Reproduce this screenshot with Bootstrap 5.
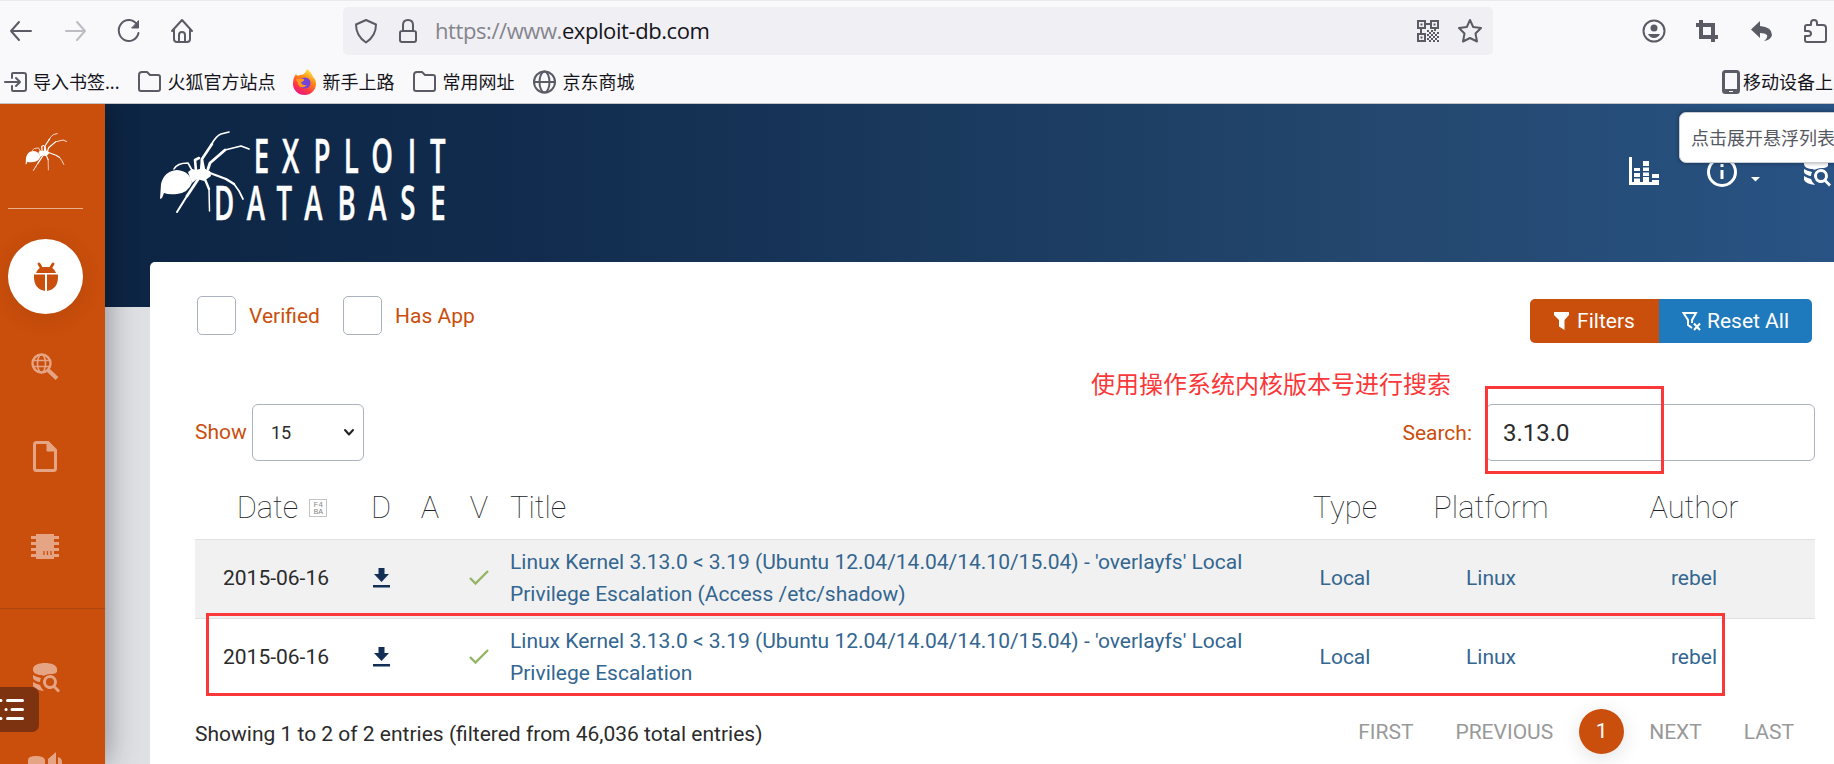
<!DOCTYPE html>
<html lang="zh-CN">
<head>
<meta charset="utf-8">
<title>Exploit Database</title>
<link href="https://cdn.jsdelivr.net/npm/bootstrap@5.3.0/dist/css/bootstrap.min.css" rel="stylesheet">
<style>
:root{--rust:#ca4e0c;--cjk:"Noto Sans","Noto Sans CJK SC",sans-serif}
body{width:1834px;height:764px;overflow:hidden;background:#dfe0e4;font-family:Roboto,sans-serif;font-size:21px;line-height:32px;color:#2b2b2b}
svg{display:block;flex:none}
.chrome{height:104px;background:#f9f9fb;border-top:1px solid #e9e9ee;border-bottom:1px solid #c4c6ca;font-family:var(--cjk);color:#15141a}
.tools{height:60px;padding-left:8px}
.ic{fill:none;stroke:#5b5b66;stroke-width:2;stroke-linecap:round;stroke-linejoin:round}
.urlbar{width:1150px;height:48px;background:#f0f0f4;border-radius:5px;margin-left:148px;padding:0 10px 0 11px}
.url{font-family:"Open Sans",sans-serif;font-size:22px;letter-spacing:-.42px;color:#84848c;white-space:nowrap;margin-left:17px;margin-top:-2px}
.url b{font-weight:400;color:#15141a}
.marks{height:41px;font-size:18px;line-height:24px;padding-left:4px;white-space:nowrap}
.marks .bm{display:flex;align-items:center;gap:5px}
.side{width:105px;background:var(--rust);box-shadow:0 0 30px 0 rgba(0,0,0,.42);z-index:2}
.side .rule1{width:75px;height:1px;background:#e9b090;margin-left:8px}
.active-nav{width:75px;height:75px;border-radius:50%;background:#fff;margin:30px 0 0 8px;box-shadow:0 4px 18px 3px rgba(90,50,0,.12)}
.fade-ic{fill:#e5a585}
.listbtn{left:0;top:583px;width:39px;height:45px;background:#7d3210;border-radius:0 7px 7px 0}
.main{overflow:hidden}
.hero{height:203px;background:linear-gradient(90deg,#0d2544,#112c4e 25%,#24486f 75%,#285384)}
.hero-logo{margin:20px 0 0 50px;overflow:visible}
.panel{width:1700px;height:510px;margin:-45px 0 0 45px;background:#fff;border-radius:5px 0 0 0;padding:34px 0 0 45px;position:relative}
.rust{color:var(--rust)}
.boxy{width:39px;height:39px;border:1px solid #aab2bd;border-radius:5px}
.btn-x{height:44px;color:#fff;font-size:21px;line-height:44px;display:flex;align-items:center;justify-content:center;border:0;text-decoration:none}
.fieldbox{height:57px;border:1px solid #aab2bd;border-radius:6px;display:flex;align-items:center}
.tb{width:1620px;table-layout:fixed;margin:0}
.tb th{font-weight:100;font-size:30.8px;line-height:40px;padding:4px 0 0;height:65px;border:0;text-align:center;vertical-align:middle}
.tb td{padding:6px 8px 8px;height:79px;border:0;border-top:1px solid #dfe1e5;text-align:center;vertical-align:middle;color:#336690;line-height:32px}
.tb td.ttl,.tb th.ttl{text-align:left;padding-left:7px;white-space:nowrap}
.tb td.day{color:#2b2b2b}
.tb tr.odd td{background:#f1f1f1}
.tb svg{margin:auto}
.hexbox{width:18px;height:18px;border:1px solid #c4c4c4;color:#888;font:8px/7px "Liberation Mono",monospace;padding-top:1px}
.pager{color:#999}
.dot{width:45px;height:45px;border-radius:50%;background:var(--rust);color:#fff;text-align:center;line-height:45px;box-shadow:0 4px 20px rgba(0,0,0,.12)}
.redbox{position:absolute;border:3px solid #fb3839}
.note{position:absolute;left:941px;top:105px;font:24px/32px "Noto Sans CJK SC",sans-serif;color:#fb3839;white-space:nowrap}
.tip{position:absolute;left:1679px;top:112px;width:170px;height:51px;background:#fff;border:1px solid #c9ced6;border-radius:7px;box-shadow:0 0 4px rgba(0,0,0,.4);font:18px/48px "Noto Sans CJK SC",sans-serif;color:#55585f;padding-left:11px;white-space:nowrap;z-index:5}
</style>
</head>
<body>
<svg width="0" height="0" style="position:absolute">
<defs>
<g id="spiderfull">
<path d="M11 62Q14 49 27 48Q40 49 42 61Q38 71 27 72Q19 73 14 71L12 76L10 77Z"/>
<path d="M38 50L42 47L46 48L53 46L60 49L61 54L54 59L47 57L42 61Z"/>
<g fill="none" stroke="#fff" stroke-linejoin="round" stroke-linecap="round">
<path stroke-width="2.6" d="M51 50L52 37L62 22"/>
<path stroke-width="1.7" d="M61 23Q66 14 71 12L79 10"/>
<path stroke-width="2.8" d="M58 47L60 41L75 28"/>
<path stroke-width="1.8" d="M75 28L91 24L99 27"/>
<path stroke-width="2.4" d="M60 51L76 57L84 62"/>
<path stroke-width="1.7" d="M84 62L89 69L93 77"/>
<path stroke-width="2.4" d="M54 55L59 67"/>
<path stroke-width="1.5" d="M59 67L59.5 89"/>
<path stroke-width="2.8" d="M49 56L37 74"/>
<path stroke-width="2" d="M37 74L27 90"/>
<path stroke-width="1.6" d="M43 50L38 41Q27 41 24 47"/>
<path stroke-width="2.6" d="M46 49L45 38L49 36M54 48L52 38"/>
</g></g>
<g id="dbs">
<path d="M1 6C1 2 7 0 13 0S25 2 25 6V9C23 11 21 11 19 11C14 11 11 14 10 12C5 12 1 10 1 7Z"/>
<path d="M1 12Q4 14 9 15Q8 17 8 19Q2 18 1 15ZM1 19Q4 21 8 22Q9 25 12 28Q3 27 1 23Z"/>
<path fill-rule="evenodd" d="M18 12a7 7 0 1 0 3.6 13L26 29.500L28 27.500L23.600 23A7 7 0 0 0 18 12zM18 15a4 4 0 1 1 0 8a4 4 0 0 1 0-8z"/>
</g>
</defs>
</svg>

<header class="chrome">
<div class="tools d-flex align-items-center">
<svg class="ic" width="24" height="24"><path d="M3 12H23M11 3L3 12L11 21"/></svg>
<svg class="ic" width="24" height="24" style="margin-left:32px;stroke:#bcbcc2"><path d="M2 12H21M13 3L21 12L13 21"/></svg>
<svg class="ic" width="26" height="26" style="margin-left:28px"><path d="M21 6.500A10 10.500 0 1 0 22.500 15"/><path d="M22.500 3V10H16Z" fill="#5b5b66" stroke-width="1"/></svg>
<svg class="ic" width="26" height="26" style="margin-left:27px"><path d="M3 13L13 2L23 13M5 11V21Q5 24 8 24H18Q21 24 21 21V11M10 24V17Q10 14 13 14T16 17V24"/></svg>
<div class="urlbar d-flex align-items-center">
<svg class="ic" width="24" height="26"><path d="M12 2L22 6.500Q22 18 12 24.500Q2 18 2 6.500Z"/></svg>
<svg class="ic" width="20" height="26" style="margin-left:20px"><path d="M4 13H16Q18 13 18 15V22Q18 24 16 24H4Q2 24 2 22V15Q2 13 4 13ZM5 13V7Q5 2 10 2T15 7V13"/></svg>
<span class="url">https://www.<b>exploit-db.com</b></span>
<svg class="ms-auto" width="22" height="22" fill="#5b5b66"><path fill-rule="evenodd" d="M0 0H9V9H0ZM2 2V7H7V2ZM13 0H22V9H13ZM15 2V7H20V2ZM0 13H9V22H0ZM2 15V20H7V15ZM3.500 3.500H5.500V5.500H3.500ZM16.500 3.500H18.500V5.500H16.500ZM3.500 16.500H5.500V18.500H3.500ZM9 3H13V5H9ZM3 9H5V13H3ZM17 9H19V11H17ZM10 10H12V12H10ZM14 10H16V12H14ZM12 12H14V14H12ZM16 12H18V14H16ZM20 12H22V14H20ZM10 14H12V16H10ZM14 14H16V16H14ZM18 14H20V16H18ZM12 16H14V18H12ZM16 16H18V18H16ZM20 16H22V18H20ZM10 18H12V20H10ZM14 18H16V20H14ZM18 18H20V20H18ZM12 20H14V22H12ZM16 20H18V22H16ZM20 20H22V22H20Z"/></svg>
<svg class="ic" width="26" height="26" style="margin-left:18px"><path d="M13 2L16.200 9L24 10L18.500 15.500L20 23.500L13 20L6 23.500L7.500 15.500L2 10L9.800 9Z"/></svg>
</div>
<svg class="ic" width="26" height="26" style="margin-left:148px"><circle cx="13" cy="13" r="10.500"/><circle cx="13" cy="10" r="3.500" fill="#5b5b66" stroke="none"/><path d="M7 16H19Q17 20 13 20T7 16Z" fill="#5b5b66" stroke="none"/></svg>
<svg width="24" height="24" style="margin-left:28px" fill="none" stroke="#5b5b66" stroke-width="4"><path d="M1 6H18V23M6 1V18H23"/></svg>
<svg width="24" height="24" style="margin-left:31px" fill="#5b5b66"><path d="M10 2V7Q22 8 22 16Q21 21 14 22Q18 19 17 16Q15 14 10 14V19L1 10.500Z"/></svg>
<svg class="ic" width="26" height="26" style="margin-left:29px"><path d="M2 13V9Q2 7 4 7H8V5Q8 2 11 2T14 5V7H20Q23 7 23 10V22Q23 24 21 24H4Q2 24 2 22V18H5Q8 18 8 15.500T5 13Z"/></svg>
</div>
<div class="marks d-flex align-items-center">
<div class="bm"><svg class="ic" width="24" height="24"><path d="M8 8V4Q8 3 9 3H20Q22 3 22 5V19Q22 21 20 21H9Q8 21 8 20V16M1 12H16M12 8L16 12L12 16"/></svg>导入书签...</div>
<div class="bm" style="margin-left:18px"><svg class="ic" width="25" height="24"><path d="M5 2H10L13 5H21Q23 5 23 7V19Q23 21 21 21H4Q2 21 2 19V5Q2 2 5 2Z"/></svg>火狐官方站点</div>
<div class="bm" style="margin-left:17px"><svg width="25" height="26"><defs><linearGradient id="fx" x1=".8" y1="0" x2=".3" y2="1"><stop offset="0" stop-color="#fff44f"/><stop offset=".4" stop-color="#ff8a16"/><stop offset=".75" stop-color="#ff3647"/><stop offset="1" stop-color="#e31587"/></linearGradient></defs><path fill="url(#fx)" d="M15 0Q20 4 21 8Q24 10 24 15A11.500 11 0 0 1 1 15Q1 9 4 5Q5 8 8 6Q13 6 15 0Z"/><circle cx="13" cy="14" r="5.500" fill="#7543d8"/><path d="M4 10L12 10Q13 12 9 13Q10 17 15 16Q11 20 7 17Z" fill="#ff9a1e"/></svg>新手上路</div>
<div class="bm" style="margin-left:18px"><svg class="ic" width="25" height="24"><path d="M5 2H10L13 5H21Q23 5 23 7V19Q23 21 21 21H4Q2 21 2 19V5Q2 2 5 2Z"/></svg>常用网址</div>
<div class="bm" style="margin-left:18px"><svg class="ic" width="25" height="24"><circle cx="12.500" cy="12" r="10.500"/><ellipse cx="12.500" cy="12" rx="5" ry="10.500"/><path d="M2 12H23"/></svg>京东商城</div>
<div class="bm ms-auto overflow-hidden" style="width:112px;gap:3px"><svg width="18" height="24"><rect x="1.500" y="1.500" width="15" height="21" rx="2" fill="none" stroke="#5b5b66" stroke-width="3"/><path d="M2 19H16V23H2Z" fill="#5b5b66"/><path d="M7 21.500H11" stroke="#fff"/></svg>移动设备上的</div>
</div>
</header>

<div class="d-flex position-relative overflow-hidden" style="height:660px">
<nav class="side flex-shrink-0">
<svg width="50" height="42" viewBox="0 0 108.700 91.300" fill="#fff" style="margin:25px 0 37px 21px"><use href="#spiderfull"/></svg>
<div class="rule1"></div>
<div class="active-nav d-flex align-items-center justify-content-center"><svg width="26" height="30" fill="#ca4e0c"><path d="M3 11Q5 5 11 5H15Q21 5 23 11ZM1 12.500H12V29Q1 27 1 15ZM14 12.500H25V15Q25 27 14 29Z"/><path d="M6 2L9 7M20 2L17 7" stroke="#ca4e0c" stroke-width="2.800" stroke-linecap="round"/></svg></div>
<svg width="28" height="28" fill="none" stroke="#e5a585" style="margin:39px 0 0 31px"><circle cx="10.500" cy="10.500" r="9" stroke-width="2.400"/><ellipse cx="10.500" cy="10.500" rx="4" ry="9" stroke-width="1.600"/><path d="M2 7.500H19M2 13.500H19" stroke-width="1.600"/><path d="M17 17L26 25.500" stroke-width="4"/></svg>
<svg width="24" height="31" style="margin:60px 0 0 33px" fill="none" stroke="#e5a585" stroke-width="3"><path d="M3.500 1.500H15L22.500 9V27.500Q22.500 29.500 20.500 29.500H3.500Q1.500 29.500 1.500 27.500V3.500Q1.500 1.500 3.500 1.500Z"/><path d="M14 1V10H23L15 1Z" fill="#e5a585" stroke-width="1"/></svg>
<svg class="fade-ic" width="28" height="25" style="margin:62px 0 0 31px"><path d="M5 0H23V2H28V5H23V8H28V11H23V14H28V17H23V20H28V23H23V25H5V23H0V20H5V17H0V14H5V11H0V8H5V5H0V2H5Z"/><path d="M13 17V21M16.500 17V21M20 17V21" stroke="#ca4e0c" stroke-width="1.300"/></svg>
<div style="height:1px;background:#ad4510;margin-top:49px"></div>
<svg class="fade-ic" width="29" height="30" style="margin:54px 0 0 32px"><use href="#dbs"/></svg>
<svg class="fade-ic" width="36" height="30" style="margin:59px 0 0 28px"><path d="M0 8Q0 4 8 4T17 8V30H0ZM20 7L28 0V30H20ZM30 5Q34 6 34 10V30H30Z"/></svg>
<div class="listbtn position-absolute"><svg width="39" height="45" stroke="#fff" stroke-width="3" stroke-linecap="round"><path d="M7.500 13.500H22.500M12 22.500H22.500M7.500 31.500H22.500M0 13.500H1M6 22.500H6.100M0 31.500H1"/></svg></div>
</nav>
<main class="main flex-grow-1">
<div class="hero d-flex justify-content-between">
<svg class="hero-logo" width="310" height="110" viewBox="0 0 310 110" fill="#fff"><g transform="translate(-5 -2)"><use href="#spiderfull"/></g>
<g font-family="Open Sans,sans-serif" font-weight="600" font-size="47.600" text-anchor="middle" stroke="#fff" stroke-width=".5"><text transform="translate(0 49) scale(.58 1)" x="183.600 233.600 288 338.500 391.400 443 487.400">EXPLOIT</text>
<text transform="translate(0 96) scale(.58 1)" x="119 174 223 273 330.500 383.500 436 488">DATABASE</text></g>
</svg>
<div class="d-flex align-items-start" style="padding-top:53px">
<svg width="32" height="29" fill="#fff" style="margin-right:46px"><path d="M1 0H4V25H6V21.500H12V25H15V20H21V25H24V23H31V28H1ZM6 11H12V14H6ZM6 16H12V20H6ZM15 4H21V9H15ZM15 10.500H21V14H15ZM15 15.500H21V19H15ZM24 17H31V21H24Z"/></svg>
<svg width="32" height="32" fill="none" stroke="#fff" stroke-width="3"><circle cx="16" cy="15" r="13.500"/><path d="M16 13V22M16 7V10"/></svg>
<svg width="9" height="5" fill="#fff" style="margin:20px 43px 0 13px"><path d="M0 0H9L4.500 4.500Z"/></svg>
<svg width="30" height="31" fill="#fff" style="margin:0 1px 0 0"><use href="#dbs"/></svg>
</div>
</div>
<section class="panel">
<div class="d-flex" style="height:108px;width:1617px">
<div class="boxy" style="margin-left:2px"></div><span class="rust" style="margin:4px 0 0 13px;width:94px">Verified</span>
<div class="boxy"></div><span class="rust" style="margin:4px 0 0 13px">Has App</span>
<div class="d-flex ms-auto" style="margin-top:3px">
<a class="btn-x" style="width:129px;background:#ca4e0c;border-radius:5px 0 0 5px;gap:8px"><svg width="15" height="18" fill="#fff"><path d="M0 0H15V3L10.500 8V18L5 14.500V8L0 3Z"/></svg>Filters</a>
<a class="btn-x" style="width:153px;background:#1f7abd;border-radius:0 5px 5px 0;gap:6px"><svg width="19" height="20" fill="none" stroke="#fff" stroke-width="2"><path d="M10 17L6 14V9L1.500 2H14L10 9V12M12 12.500L18 19M18 12.500L12 19"/></svg>Reset All</a></div>
</div>
<div class="d-flex align-items-center" style="width:1620px;height:57px">
<span class="rust" style="width:57px;margin-top:-2px">Show</span>
<div class="fieldbox" style="width:112px;padding-left:18px;font-size:18px">15<svg class="ic ms-auto" width="12" height="9" style="margin-right:8px;stroke:#222"><path d="M2 2L6 6.500L10 2"/></svg></div>
<span class="rust ms-auto" style="margin-right:14px;margin-top:1px">Search:</span>
<div class="fieldbox" style="width:329px;padding-left:16px;font-size:24px">3.13.0</div>
</div>
<table class="table tb" style="margin-top:13px">
<colgroup><col style="width:162px"><col style="width:48px"><col style="width:50px"><col style="width:48px"><col style="width:778px"><col style="width:128px"><col style="width:164px"><col style="width:242px"></colgroup>
<thead><tr><th><div class="d-flex align-items-center justify-content-center" style="gap:11px;padding-left:12px">Date<span class="hexbox">F4<br>BA</span></div></th><th>D</th><th>A</th><th>V</th><th class="ttl">Title</th><th>Type</th><th>Platform</th><th>Author</th></tr></thead>
<tbody>
<tr class="odd"><td class="day px-0">2015-06-16</td><td class="px-0"><svg width="17" height="20" fill="#132f55"><path d="M5.500 0H11.500V6H16L8.500 14L1 6H5.500ZM0 17H17V19.500H0Z"/></svg></td><td></td><td class="px-0"><svg width="20" height="16" fill="none" stroke="#94b566" stroke-width="2.400"><path d="M1 8L6.500 13.500L19 1"/></svg></td><td class="ttl">Linux Kernel 3.13.0 &lt; 3.19 (Ubuntu 12.04/14.04/14.10/15.04) - 'overlayfs' Local<br>Privilege Escalation (Access /etc/shadow)</td><td>Local</td><td>Linux</td><td>rebel</td></tr>
<tr><td class="day px-0">2015-06-16</td><td class="px-0"><svg width="17" height="20" fill="#132f55"><path d="M5.500 0H11.500V6H16L8.500 14L1 6H5.500ZM0 17H17V19.500H0Z"/></svg></td><td></td><td class="px-0"><svg width="20" height="16" fill="none" stroke="#94b566" stroke-width="2.400"><path d="M1 8L6.500 13.500L19 1"/></svg></td><td class="ttl">Linux Kernel 3.13.0 &lt; 3.19 (Ubuntu 12.04/14.04/14.10/15.04) - 'overlayfs' Local<br>Privilege Escalation</td><td>Local</td><td>Linux</td><td>rebel</td></tr>
</tbody></table>
<div class="d-flex align-items-center pager" style="width:1620px;height:45px;margin-top:12px">
<span style="color:#2b2b2b;padding-top:4px">Showing 1 to 2 of 2 entries (filtered from 46,036 total entries)</span>
<span class="ms-auto">FIRST</span><span style="margin-left:42px">PREVIOUS</span><div class="dot" style="margin:0 25px 0 26px">1</div><span>NEXT</span><span style="margin:0 21px 0 42px">LAST</span>
</div>
<div class="note">使用操作系统内核版本号进行搜索</div>
<div class="redbox" style="left:1335px;top:124px;width:179px;height:88px"></div>
<div class="redbox" style="left:56px;top:351px;width:1519px;height:83px"></div>
</section>
</main>
</div>
<div class="tip">点击展开悬浮列表</div>
<script src="https://cdn.jsdelivr.net/npm/bootstrap@5.3.0/dist/js/bootstrap.bundle.min.js"></script>
</body>
</html>
